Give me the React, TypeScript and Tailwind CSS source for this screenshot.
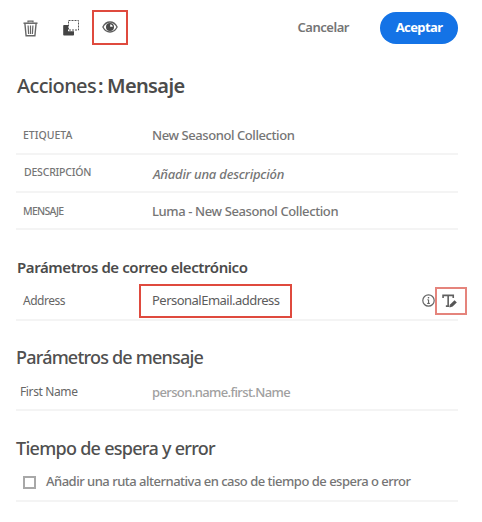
import type { ReactNode } from "react";

function TrashIcon() {
  return (
    <svg className="h-[17px] w-[15px] shrink-0" viewBox="0 0 15 17" fill="none" stroke="#666">
      <path d="M0.5 3.200h14" strokeWidth="1.500" />
      <path d="M5 2.600V1.200h5v1.400" strokeWidth="1.200" />
      <path d="M1.900 3.500l1.200 12.200h8.800l1.200-12.200" strokeWidth="1.400" />
      <path d="M5.100 5.500l.5 8.500M7.500 5.500V14M9.900 5.500L9.400 14" strokeWidth="1.200" />
    </svg>
  );
}

function DuplicateIcon() {
  return (
    <svg className="h-[16px] w-[16px] shrink-0" viewBox="0 0 16 16">
      <path d="M1 5H5V11.200H11v3.500a.8.8 0 0 1-.8.8H1a.8.8 0 0 1-.8-.8V5.800A.8.8 0 0 1 1 5z" fill="#444" />
      <rect x="5.500" y=".5" width="10" height="9.500" fill="none" stroke="#555" strokeWidth="1" strokeDasharray="2 1" />
    </svg>
  );
}

function EyeIcon() {
  return (
    <svg className="-ml-px h-[12px] w-[16px]" viewBox="0 0 16 12">
      <path d="M.9 6C2.400 3 4.800 1 8 1s5.600 2 7.100 5C13.600 9 11.200 11 8 11S2.400 9 .9 6z" fill="#fff" stroke="#5c5c5c" strokeWidth="1.300" />
      <circle cx="8" cy="6" r="4" fill="#484848" />
      <path d="M8.200 3.200V5.800h2.600A2.700 2.700 0 0 0 8.200 3.200z" fill="#fff" />
    </svg>
  );
}

function InfoIcon() {
  return (
    <svg className="h-[13px] w-[13px] shrink-0" viewBox="0 0 13 13">
      <circle cx="6.500" cy="6.500" r="5.700" fill="none" stroke="#666" strokeWidth="1.200" />
      <circle cx="6.500" cy="3.700" r=".8" fill="#555" />
      <path d="M5.400 5.800h1.200v3.500M5.200 9.400h2.700" fill="none" stroke="#555" strokeWidth="1" />
    </svg>
  );
}

function TextEditIcon() {
  return (
    <svg className="-ml-[3px] h-[14px] w-[15px]" viewBox="0 0 14 13">
      <path d="M1 3.800V1.200h9.500v2.600M5.750 1.200v10M3.600 11.300h3.400" fill="none" stroke="#606060" strokeWidth="1.500" />
      <path d="M7 12.600l.8-3 3.900-3.900 2.100 2.100-3.900 3.900z" fill="#555" />
    </svg>
  );
}

function Row({ label, children, className }: { label: ReactNode; children?: ReactNode; className: string }) {
  return (
    <div className={`flex items-center border-b-2 border-[#f4f4f4] ${className}`}>
      <div className="w-[136px] shrink-0 whitespace-nowrap">{label}</div>
      {children}
    </div>
  );
}

export default function App() {
  return (
    <div className="h-[522px] w-[482px] overflow-hidden bg-white pr-6 pl-4 font-['Noto_Sans',sans-serif] whitespace-nowrap text-[#757575]">
      <header className="flex h-[56px] items-center pl-[7px]">
        <TrashIcon />
        <div className="ml-[25px]"><DuplicateIcon /></div>
        <div className="mb-[2px] ml-[13px] flex h-[35px] w-[36px] items-center justify-center border-2 border-[#df4a3e]">
          <EyeIcon />
        </div>
        <button className="ml-auto pb-px text-[13px] font-semibold tracking-[-0.46px]">Cancelar</button>
        <button className="ml-[31px] h-8 w-[78px] rounded-full bg-[#1473e6] pb-px text-[13px] font-bold tracking-[-0.6px] text-white">Aceptar</button>
      </header>

      <h1 className="flex h-[60px] items-center pl-px text-[20px] font-semibold tracking-[-0.63px] text-[#4b4b4b]">
        <span className="font-medium">Acciones</span>
        <span className="mr-[4px] ml-[2px]">:</span>
        <span>Mensaje</span>
      </h1>

      <Row className="h-[39px] pl-[7px]" label={<span className="block pt-[2px] text-[10.500px] font-medium">ETIQUETA</span>}>
        <span className="-ml-[7px] pt-[3px] text-[13px] font-medium tracking-[-0.42px]">New Seasonol Collection</span>
      </Row>
      <Row className="h-[38px] pl-[8px]" label={<span className="block text-[10.500px] font-medium tracking-[-0.2px]">DESCRIPCIÓN</span>}>
        <span className="-ml-[7px] pt-[4px] text-[13px] font-medium italic tracking-[-0.2px]">Añadir una descripción</span>
      </Row>
      <Row className="h-[37px] pl-[7px]" label={<span className="block pt-[2px] text-[10.500px] font-medium tracking-[-0.75px]">MENSAJE</span>}>
        <span className="-ml-[7px] pt-[3px] text-[13px] font-medium tracking-[-0.39px]">Luma - New Seasonol Collection</span>
      </Row>

      <h2 className="mt-[24px] flex h-[28px] items-center pb-[2px] pl-px text-[15px] font-semibold tracking-[-0.42px] text-[#4b4b4b]">
        Parámetros de correo electrónico
      </h2>
      <Row className="h-[39px] pl-[7px]" label={<span className="block text-[12px] tracking-[-0.5px] text-[#666]">Address</span>}>
        <div className="-ml-[20px] flex h-[34px] w-[153px] items-center border-2 border-[#df4a3e] pl-[11px] text-[13px] tracking-[-0.52px] text-[#5c5c5c]">
          PersonalEmail.address
        </div>
        <div className="-mr-[9px] ml-auto flex items-center">
          <InfoIcon />
          <div className="mt-px flex h-[28px] w-[32px] items-center justify-center border-2 border-[#e5847c]">
            <TextEditIcon />
          </div>
        </div>
      </Row>

      <h2 className="mt-[18px] flex h-[38px] items-center pb-[2px] text-[18px] font-medium tracking-[-0.8px] text-[#505050]">Parámetros de mensaje</h2>
      <Row className="h-[34px] pl-[4px]" label={<span className="block pb-[2px] text-[12px] tracking-[-0.38px] text-[#666]">First Name</span>}>
        <span className="-ml-[4px] pb-px text-[13px] font-medium tracking-[-0.62px] text-[#a0a0a0]">person.name.first.Name</span>
      </Row>

      <h2 className="mt-[20px] flex h-[36px] items-center pb-px text-[18px] font-medium tracking-[-0.72px] text-[#505050]">Tiempo de espera y error</h2>
      <label className="flex h-[35px] items-center border-b-2 border-[#f4f4f4] pb-[3px] pl-[7px] text-[13px] font-medium tracking-[-0.5px]">
        <span className="mr-[10px] h-[13px] w-[13px] border-2 border-[#a8a8a8]" />
        Añadir una ruta alternativa en caso de tiempo de espera o error
      </label>
    </div>
  );
}
